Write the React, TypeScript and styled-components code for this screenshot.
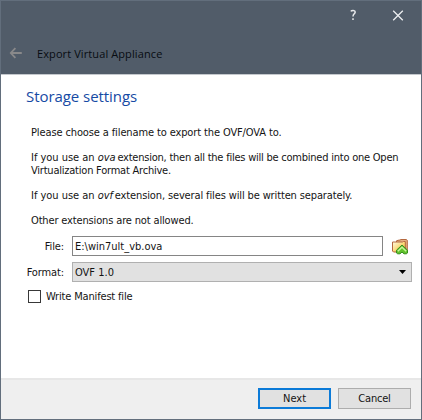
import React from "react";
import styled, { createGlobalStyle } from "styled-components";

const GlobalStyle = createGlobalStyle`
  * { box-sizing: border-box; }
  body { margin: 0; }
`;

const Dialog = styled.div`
  width: 422px;
  height: 420px;
  display: flex;
  flex-direction: column;
  background: #fff;
  border: 1px solid #626e7c;
  color: #141414;
  font: 11px/13px "DejaVu Sans Condensed", "DejaVu Sans", sans-serif;
`;

const Header = styled.header`
  height: 74px;
  flex: none;
  background: #515c69;
  border-bottom: 1px solid #c4c8cd;
`;

const Controls = styled.div`
  display: flex;
  justify-content: flex-end;
  padding: 8px 17px 0 0;
  gap: 35px;
  height: 42px;
`;

const TitleBar = styled.div`
  display: flex;
  align-items: center;
  height: 20px;
  padding-left: 7px;
  gap: 15px;
`;

const WindowTitle = styled.div`
  font: 11px/16px "Open Sans", sans-serif;
  letter-spacing: 0.1px;
  padding-top: 2px;
  color: #080c12;
`;

const Body = styled.main`
  flex: 1;
  padding: 11px 9px 0 25px;
`;

const Heading = styled.h1`
  margin: 0 0 20px;
  font: 15px/20px "Open Sans", sans-serif;
  letter-spacing: -0.06px;
  color: #164aa4;
`;

const Copy = styled.div`
  padding-left: 5px;
  display: flex;
  flex-direction: column;
  gap: 12px;
`;

const Line = styled.div<{ $track: number }>`
  white-space: nowrap;
  letter-spacing: ${(p) => p.$track}px;
`;

const Ext = styled.em`
  letter-spacing: -0.1px;
  margin-right: 2px;
`;

const Lead = styled.span`
  letter-spacing: -0.02px;
`;

const Form = styled.div`
  display: grid;
  grid-template-columns: 37px 1fr;
  column-gap: 8px;
  row-gap: 6px;
  padding: 9px 0 0 1px;
  align-items: center;
`;

const Label = styled.label`
  justify-self: end;
  white-space: nowrap;
  letter-spacing: -0.12px;
`;

const FileRow = styled.div`
  display: flex;
  align-items: center;
  gap: 8px;
`;

const Input = styled.div`
  width: 311px;
  height: 20px;
  flex: none;
  border: 1px solid #858585;
  padding: 3px 2px 0;
`;

const Select = styled.div`
  width: 340px;
  height: 20px;
  display: flex;
  align-items: center;
  justify-content: space-between;
  padding: 0 5px 0 2px;
  background: #e1e1e1;
  border: 1px solid #b0b0b0;
`;

const CheckRow = styled.div`
  display: flex;
  align-items: center;
  gap: 5px;
  padding: 8px 0 0 2px;
  letter-spacing: -0.17px;
`;

const Checkbox = styled.span`
  width: 13px;
  height: 13px;
  border: 1px solid #383838;
`;

const Footer = styled.footer`
  height: 41px;
  flex: none;
  display: flex;
  justify-content: flex-end;
  gap: 7px;
  padding: 8px 10px 0 0;
  background: #efefef;
  border-top: 2px solid #e7e7e7;
`;

const Button = styled.button<{ $primary?: boolean }>`
  width: 73px;
  height: 21px;
  padding: 0;
  font: inherit;
  color: inherit;
  letter-spacing: ${(p) => (p.$primary ? 0 : -0.2)}px;
  background: #e1e1e1;
  border: ${(p) => (p.$primary ? "2px solid #0c7bd8" : "1px solid #adadad")};
`;

const HelpIcon = () => (
  <svg width="8" height="12" viewBox="0 0 8 12" fill="none" stroke="#e8eaec" strokeWidth="1.5">
    <path d="M1.8 2.4C2.6 1.3 6.2 .9 6.2 3.1C6.2 4.9 4 4.9 4 7.6M4 9.3V11" />
  </svg>
);

const CloseIcon = () => (
  <svg width="12" height="12" viewBox="0 0 12 12" fill="none" stroke="#eceef0" strokeWidth="1.3">
    <path d="M1.2 1.7L10.8 11.3M10.8 1.7L1.2 11.3" />
  </svg>
);

const BackIcon = () => (
  <svg width="14" height="12" viewBox="0 0 14 12" fill="none" stroke="#89898a" strokeWidth="1.8">
    <path d="M13.8 6H3M7.4 1.2L2.8 6L7.4 10.8" />
  </svg>
);

const FolderIcon = () => (
  <svg width="18" height="17" viewBox="0 0 18 17">
    <defs>
      <linearGradient id="folder" x1="0" y1="0" x2="1" y2="1">
        <stop offset="0" stopColor="#fffbe6" />
        <stop offset="0.55" stopColor="#fbd873" />
        <stop offset="1" stopColor="#f0ae35" />
      </linearGradient>
    </defs>
    <path d="M5.5 4V2.8L7 2.3L9 2L10 1.5H15.2L16.3 2.3V13H5.5Z" fill="#e6b184" stroke="#b4683f" />
    <path d="M1.5 4H11.5L12.5 3.5H14.3V13L12.5 14H2.5L1.5 13Z" fill="url(#folder)" stroke="#b4683f" />
    <path d="M11 7L16.5 12.2V15L15.3 15.8H13L11 14L9 15.8H6.7L5.5 15V12.2Z" fill="#62c32d" stroke="#358d1c" strokeLinejoin="round" />
    <path d="M6.8 13.3L11 9.3L15.2 13.3" fill="none" stroke="#c8f59b" strokeWidth="1.4" />
  </svg>
);

const DropArrow = () => (
  <svg width="7" height="4" viewBox="0 0 7 4">
    <path d="M0 0H7L3.5 4Z" fill="#000" />
  </svg>
);

export default function App() {
  return (
    <>
      <GlobalStyle />
      <Dialog>
        <Header>
          <Controls>
            <HelpIcon />
            <CloseIcon />
          </Controls>
          <TitleBar>
            <BackIcon />
            <WindowTitle>Export Virtual Appliance</WindowTitle>
          </TitleBar>
        </Header>
        <Body>
          <Heading>Storage settings</Heading>
          <Copy>
            <Line $track={-0.12}>Please choose a filename to export the OVF/OVA to.</Line>
            <div>
              <Line $track={-0.23}>
                <Lead>If you use an </Lead>
                <Ext>ova</Ext>extension, then all the files will be combined into one Open
              </Line>
              <Line $track={-0.22}>Virtualization Format Archive.</Line>
            </div>
            <Line $track={-0.13}>
              <Lead>If you use an </Lead>
              <Ext>ovf</Ext>extension, several files will be written separately.
            </Line>
            <Line $track={-0.15}>Other extensions are not allowed.</Line>
          </Copy>
          <Form>
            <Label>File:</Label>
            <FileRow>
              <Input>E:\win7ult_vb.ova</Input>
              <FolderIcon />
            </FileRow>
            <Label>Format:</Label>
            <Select>
              OVF 1.0
              <DropArrow />
            </Select>
          </Form>
          <CheckRow>
            <Checkbox />
            Write Manifest file
          </CheckRow>
        </Body>
        <Footer>
          <Button $primary>Next</Button>
          <Button>Cancel</Button>
        </Footer>
      </Dialog>
    </>
  );
}
